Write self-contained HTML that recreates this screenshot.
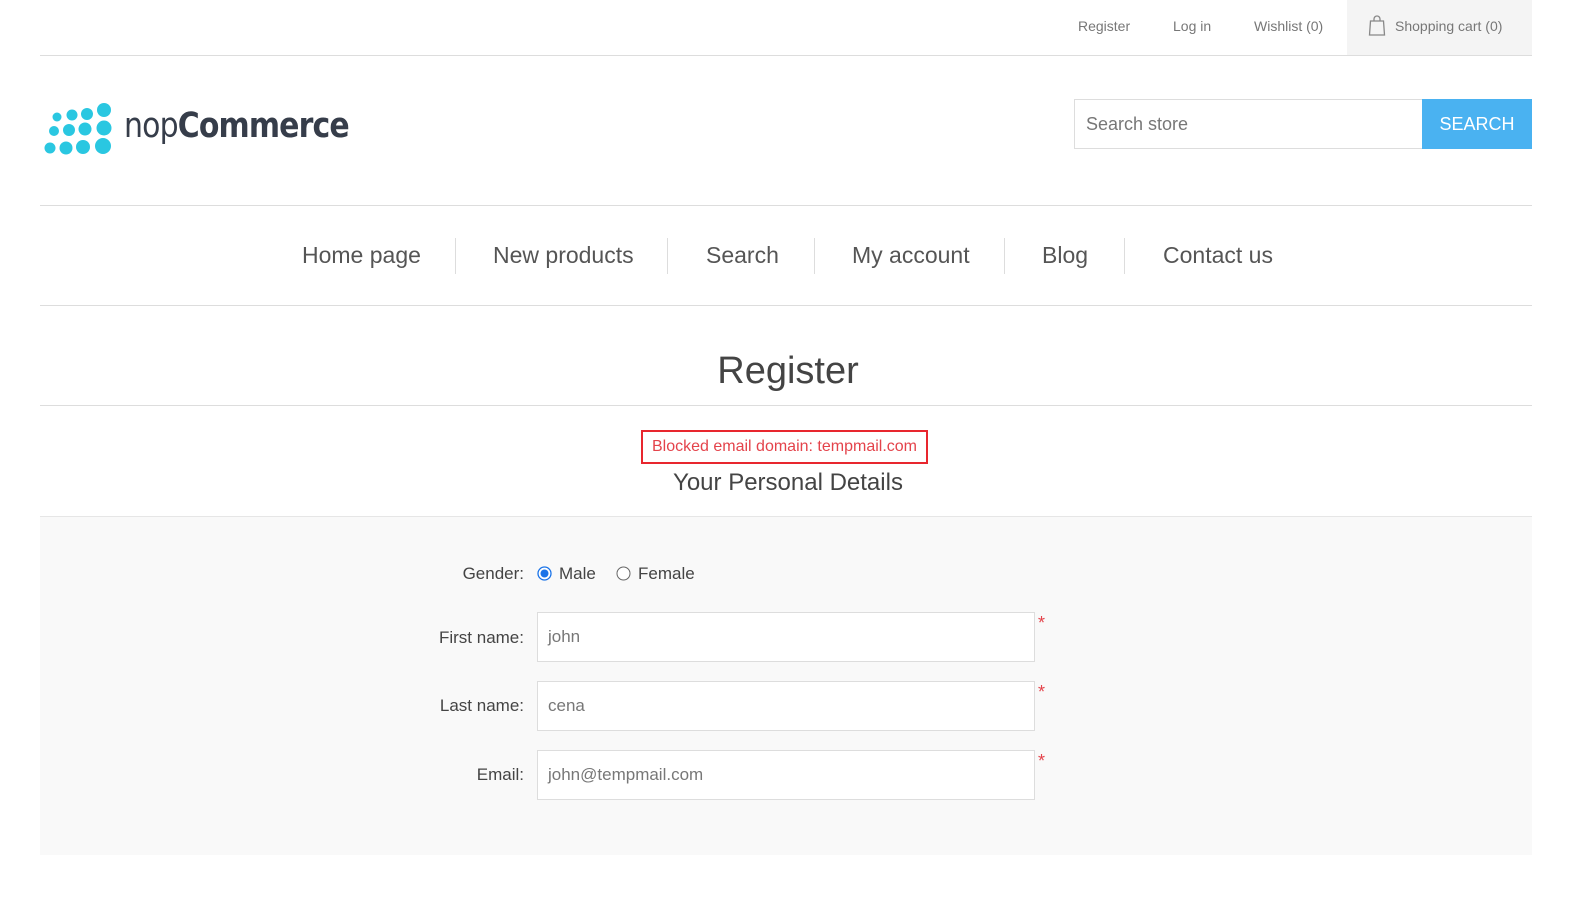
<!DOCTYPE html>
<html><head><meta charset="utf-8"><style>
*{margin:0;padding:0;box-sizing:border-box}
body{width:1576px;height:900px;background:#fff;font-family:"Liberation Sans",Arial,sans-serif;color:#444;position:relative;overflow:hidden}
.a{position:absolute;white-space:nowrap}
.hl{position:absolute;left:40px;width:1492px;height:1px;background:#ddd}
.top{font-size:14px;color:#777;top:18px}
.nav{font-size:23px;color:#555;top:242px}
.sep{position:absolute;top:238px;width:1px;height:36px;background:#ddd}
.lbl{font-size:17px;color:#444;text-align:right;right:1052px}
.inp{position:absolute;left:537px;width:498px;height:50px;background:#fff;border:1px solid #ddd;font-size:17px;color:#777;padding:14px 10px}
.star{position:absolute;left:1038px;color:#e4434b;font-size:18px}
</style></head><body>
<div class="a top" style="left:1078px">Register</div>
<div class="a top" style="left:1173px">Log in</div>
<div class="a top" style="left:1254px">Wishlist (0)</div>
<div class="a" style="left:1347px;top:0;width:185px;height:55px;background:#f4f4f4"></div>
<svg class="a" style="left:1368px;top:15px" width="18" height="21" viewBox="0 0 18 21"><path d="M6 6V4a3 3 0 0 1 6 0v2M2.5 6h13l1 14h-15z" fill="none" stroke="#888" stroke-width="1.3"/></svg>
<div class="a top" style="left:1395px">Shopping cart (0)</div>
<div class="hl" style="top:55px"></div>

<svg class="a" style="left:40px;top:100px" width="80" height="60">
<g fill="#2ac7e1">
<circle cx="17" cy="17" r="4.5"/><circle cx="32" cy="15" r="5.5"/><circle cx="47" cy="14" r="6"/><circle cx="64" cy="10" r="7"/>
<circle cx="14" cy="31" r="5"/><circle cx="29" cy="30" r="6"/><circle cx="45" cy="29" r="6.5"/><circle cx="64" cy="28" r="7.5"/>
<circle cx="10" cy="48" r="5.5"/><circle cx="26" cy="48" r="6.5"/><circle cx="43" cy="47" r="7"/><circle cx="63" cy="46" r="8"/>
</g></svg>
<div class="a" style="left:124px;top:106px;font-size:35px;color:#363d4a;letter-spacing:-1px;font-family:'DejaVu Sans','Liberation Sans',sans-serif;transform:scaleX(0.855);transform-origin:left">nop<b>Commerce</b></div>

<div class="a" style="left:1074px;top:99px;width:349px;height:50px;border:1px solid #ddd;font-size:18px;color:#777;padding:14px 11px">Search store</div>
<div class="a" style="left:1422px;top:99px;width:110px;height:50px;background:#4ab2f1;color:#fff;font-size:18px;text-align:center;line-height:50px">SEARCH</div>

<div class="hl" style="top:205px"></div>
<div class="a nav" style="left:302px">Home page</div><div class="sep" style="left:455px"></div>
<div class="a nav" style="left:493px">New products</div><div class="sep" style="left:667px"></div>
<div class="a nav" style="left:706px">Search</div><div class="sep" style="left:814px"></div>
<div class="a nav" style="left:852px">My account</div><div class="sep" style="left:1004px"></div>
<div class="a nav" style="left:1042px">Blog</div><div class="sep" style="left:1124px"></div>
<div class="a nav" style="left:1163px">Contact us</div>
<div class="hl" style="top:305px"></div>

<div class="a" style="left:0;width:1576px;text-align:center;top:350px;font-size:38px;color:#444">Register</div>
<div class="hl" style="top:405px"></div>
<div class="a" style="left:641px;top:430px;width:287px;height:34px;border:2px solid #e8262e;color:#e4434b;font-size:16px;text-align:center;line-height:30px">Blocked email domain: tempmail.com</div>
<div class="a" style="left:0;width:1576px;text-align:center;top:469px;font-size:24px;color:#444">Your Personal Details</div>
<div class="a" style="left:40px;top:516px;width:1492px;height:339px;background:#f9f9f9;border-top:1px solid #e6e6e6"></div>

<div class="a lbl" style="top:564px">Gender:</div>
<svg class="a" style="left:537px;top:566px" width="15" height="15"><circle cx="7.5" cy="7.5" r="6.5" fill="#fff" stroke="#1a73e8" stroke-width="1.3"/><circle cx="7.5" cy="7.5" r="4" fill="#1a73e8"/></svg>
<div class="a" style="left:559px;top:564px;font-size:17px;color:#444">Male</div>
<svg class="a" style="left:616px;top:566px" width="15" height="15"><circle cx="7.5" cy="7.5" r="6.5" fill="#fff" stroke="#666" stroke-width="1"/></svg>
<div class="a" style="left:638px;top:564px;font-size:17px;color:#444">Female</div>

<div class="a lbl" style="top:628px">First name:</div>
<div class="inp" style="top:612px">john</div><div class="star" style="top:613px">*</div>
<div class="a lbl" style="top:696px">Last name:</div>
<div class="inp" style="top:681px">cena</div><div class="star" style="top:682px">*</div>
<div class="a lbl" style="top:765px">Email:</div>
<div class="inp" style="top:750px">john@tempmail.com</div><div class="star" style="top:751px">*</div>
</body></html>
